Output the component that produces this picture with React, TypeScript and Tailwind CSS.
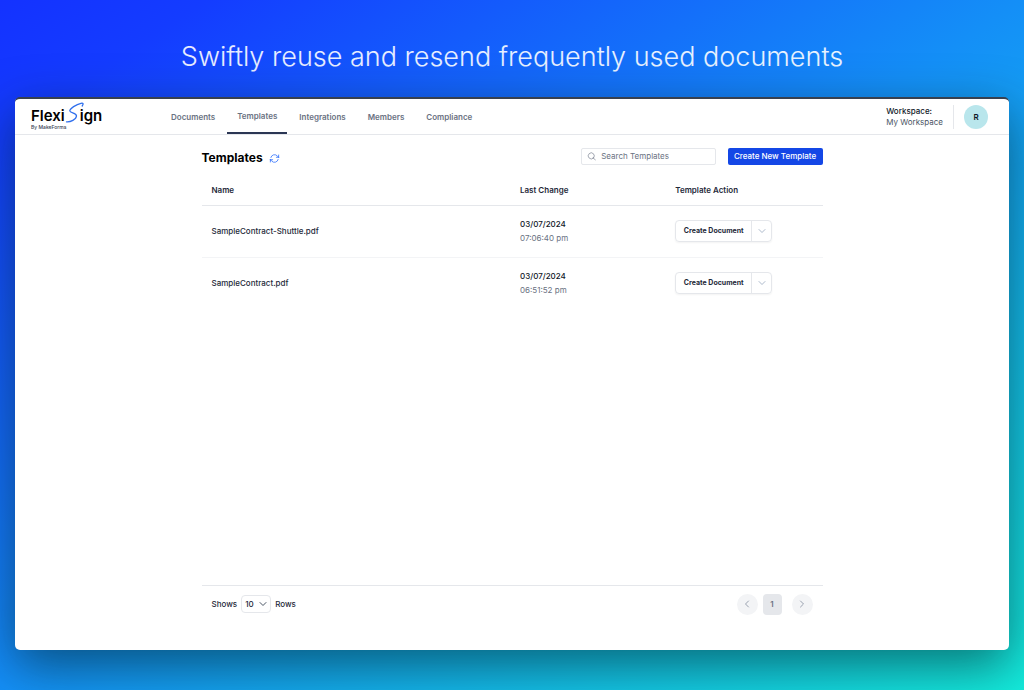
import { useState } from "react"
import { ChevronDown, ChevronLeft, ChevronRight } from "lucide-react"
import { HiOutlineArrowPath, HiOutlineMagnifyingGlass } from "react-icons/hi2"

const navItems = ["Documents", "Templates", "Integrations", "Members", "Compliance"]

const templates = [
  { name: "SampleContract-Shuttle.pdf", date: "03/07/2024", time: "07:06:40 pm" },
  { name: "SampleContract.pdf", date: "03/07/2024", time: "06:51:52 pm" },
]

function Logo() {
  return (
    <a href="#" aria-label="FlexiSign" className="flex w-[120px] shrink-0 flex-col justify-center text-black">
      <span className="flex h-5 items-end text-[15px] leading-4 font-semibold">
        Flexi
        <svg viewBox="0 0 20 22" className="mr-[-5px] h-[22px] w-5" fill="none" stroke="#2f6fed" strokeWidth="1.3" strokeLinecap="round">
          <path d="M17.200 4C18.800 1.800 18.200 .8 16 1.300C11.500 2.300 4.500 6.500 4.800 9C5.200 11.200 11.800 10.600 11.500 14C11.200 17.400 5.500 20.300 1.500 19.900" />
        </svg>
        ign
      </span>
      <span className="text-[5px] leading-[6px] font-medium text-gray-700">By MakeForms</span>
    </a>
  )
}

function Header() {
  return (
    <header className="flex h-9 items-stretch border-b border-gray-200 pr-[21px] pl-4">
      <Logo />
      <nav className="flex flex-1 gap-[2px] pl-[10px] text-[8px] font-semibold text-gray-500">
        {navItems.map((item) => (
          <a
            key={item}
            href="#"
            className={
              item === "Templates"
                ? "flex items-center border-b-2 border-[#2b3654] px-[10px]"
                : "flex items-center px-[10px]"
            }
          >
            {item}
          </a>
        ))}
      </nav>
      <div className="flex items-center text-[8px]">
        <div className="pr-[10px] leading-[11px]">
          <p className="font-medium text-gray-900">Workspace:</p>
          <p className="text-gray-600">My Workspace</p>
        </div>
        <div className="h-6 border-l border-gray-200 pl-[10px]">
          <button className="size-6 rounded-full bg-[#b9e6ec] text-[8px] font-semibold text-gray-900">R</button>
        </div>
      </div>
    </header>
  )
}

function TemplateTable() {
  return (
    <table className="w-full table-fixed text-left text-[8px]">
      <thead>
        <tr className="h-[30px] border-b border-gray-200 text-gray-800">
          <th className="w-1/2 pl-[10px] font-semibold">Name</th>
          <th className="w-1/4 pl-2 font-semibold">Last Change</th>
          <th className="w-1/4 pl-2 font-semibold">Template Action</th>
        </tr>
      </thead>
      <tbody>
        {templates.map((t) => (
          <tr key={t.name} className="h-[52px] border-b border-gray-100 last:border-b-0">
            <td className="pl-[10px] font-medium text-gray-800">{t.name}</td>
            <td className="pl-2 leading-[14px]">
              <p className="font-medium text-gray-900">{t.date}</p>
              <p className="text-gray-500">{t.time}</p>
            </td>
            <td className="pl-2">
              <div className="inline-flex h-[22px] rounded border border-gray-200 align-middle shadow-xs">
                <button className="w-[76px] border-r border-gray-200 text-[7px] font-bold text-gray-800">Create Document</button>
                <button aria-label="More actions" className="flex w-[19px] items-center justify-center text-slate-400">
                  <ChevronDown size={12} strokeWidth={1.5} />
                </button>
              </div>
            </td>
          </tr>
        ))}
      </tbody>
    </table>
  )
}

function Pagination() {
  const [rows, setRows] = useState("10")

  return (
    <footer className="flex h-[37px] items-center justify-between border-t border-gray-200 px-[10px] text-[8px] font-medium text-gray-800">
      <div className="flex items-center gap-1">
        <label htmlFor="rows">Shows</label>
        <div className="relative">
          <select
            id="rows"
            value={rows}
            onChange={(e) => setRows(e.target.value)}
            className="block h-[18px] w-[30px] appearance-none rounded border border-gray-200 bg-white pl-[3px]"
          >
            <option>10</option>
            <option>20</option>
            <option>50</option>
          </select>
          <ChevronDown size={12} strokeWidth={2} className="pointer-events-none absolute top-[3px] right-[2px] text-gray-600" />
        </div>
        <span>Rows</span>
      </div>
      <div className="flex items-center">
        <button aria-label="Previous page" className="flex size-[21px] items-center justify-center rounded-full bg-gray-100 text-gray-400">
          <ChevronLeft size={12} />
        </button>
        <button className="mr-[10px] ml-[5px] h-[21px] w-[19px] rounded-sm bg-gray-200 font-semibold text-gray-500">1</button>
        <button aria-label="Next page" className="flex size-[21px] items-center justify-center rounded-full bg-gray-100 text-gray-400">
          <ChevronRight size={12} />
        </button>
      </div>
    </footer>
  )
}

export default function App() {
  return (
    <div className="flex min-h-screen flex-col bg-[linear-gradient(to_bottom_right,#1432ff_0%,#143cff_10%,#148ff7_50%,#14ecdc_100%)] px-[15px] pb-10 font-['Inter',sans-serif]">
      <h1 className="pt-11 pb-7 text-center text-[27px] leading-[25px] font-light text-white/90">
        Swiftly reuse and resend frequently used documents
      </h1>
      <div className="flex flex-1 flex-col rounded-[5px] border-t-2 border-[#37404f] bg-white shadow-[0_16px_50px_rgba(0,30,30,0.55)]">
        <Header />
        <main className="mx-auto flex w-full max-w-[621px] flex-1 flex-col pb-7">
          <div className="flex items-center pt-[10px]">
            <h2 className="pt-1 text-[12px] leading-[18px] font-bold text-black">Templates</h2>
            <button aria-label="Refresh" className="mt-1 ml-[6px] text-blue-600">
              <HiOutlineArrowPath size={11} />
            </button>
            <div className="ml-auto flex h-[17px] w-[135px] items-center rounded-xs border border-gray-200 pl-[5px] text-gray-500">
              <HiOutlineMagnifyingGlass size={11} />
              <input
                type="search"
                aria-label="Search Templates"
                placeholder="Search Templates"
                className="ml-[5px] w-full min-w-0 text-[8px] outline-none placeholder:text-gray-500"
              />
            </div>
            <button className="ml-3 h-[17px] w-[95px] rounded-xs bg-blue-700 text-[8px] font-medium text-white">
              Create New Template
            </button>
          </div>
          <div className="mt-2 flex-1">
            <TemplateTable />
          </div>
          <Pagination />
        </main>
      </div>
    </div>
  )
}
